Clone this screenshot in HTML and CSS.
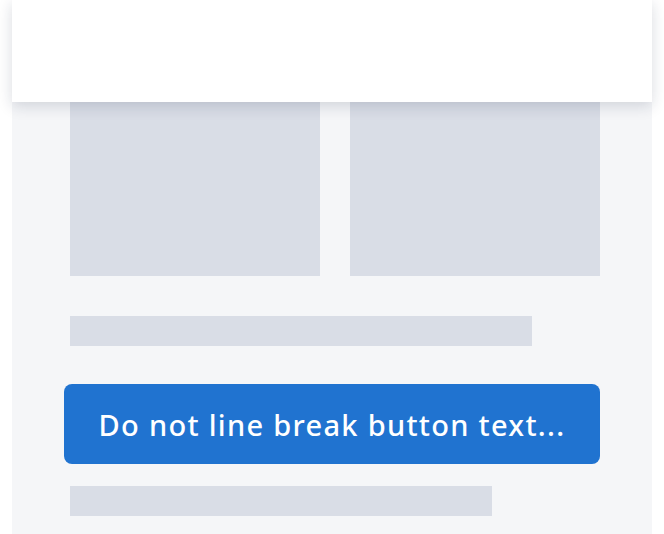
FILE: index.html
```html
<!DOCTYPE html>
<html>
<head>
<meta charset="utf-8">
<link rel="stylesheet" href="styles.css">
</head>
<body>
<header class="topbar"></header>
<main class="panel">
  <div class="tiles">
    <div class="tile"></div>
    <div class="tile"></div>
  </div>
  <div class="line line-a"></div>
  <button class="cta">Do not line break button text...</button>
  <div class="line line-b"></div>
</main>
</body>
</html>
```
FILE: styles.css
```css
html, body {
  margin: 0;
  padding: 0;
  background: #ffffff;
  overflow: hidden;
}
.topbar {
  position: fixed;
  top: 0;
  left: 12px;
  width: 640px;
  height: 102px;
  background: #ffffff;
  box-shadow: 0 4px 14px rgba(20, 30, 60, 0.16);
  z-index: 2;
}
.panel {
  margin: 0 12px;
  background: #f5f6f8;
  padding: 26px 52px 18px 58px;
  display: flex;
  flex-direction: column;
  align-items: flex-start;
}
.tiles {
  display: flex;
  gap: 30px;
}
.tile {
  width: 250px;
  height: 250px;
  background: #d9dde6;
}
.line {
  height: 30px;
  background: #d9dde6;
}
.line-a {
  width: 462px;
  margin-top: 40px;
}
.line-b {
  width: 422px;
  margin-top: 22px;
}
.cta {
  margin: 38px 0 0 -6px;
  width: 536px;
  height: 80px;
  border: none;
  border-radius: 8px;
  background: #2073d0;
  color: #ffffff;
  font-family: "Noto Sans", "Open Sans", sans-serif;
  font-size: 29px;
  font-weight: 500;
  letter-spacing: 1.3px;
  white-space: nowrap;
  padding: 0 16px;
  text-align: center;
}
```
